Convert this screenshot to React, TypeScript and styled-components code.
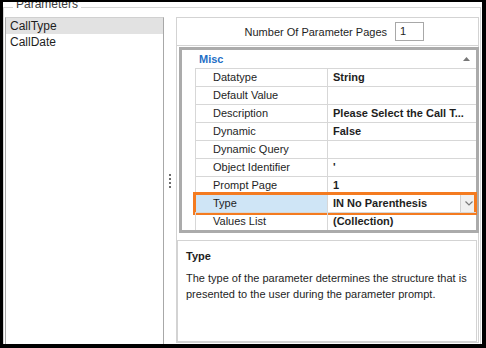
import React from "react";
import styled, { createGlobalStyle } from "styled-components";

const GlobalStyle = createGlobalStyle`
  html, body { margin: 0; padding: 0; background: #000; }
  body {
    width: 486px; height: 348px; overflow: hidden;
    font-family: "Liberation Sans", Arial, sans-serif;
    font-size: 11px; color: #1e1e1e;
  }
`;

const Screen = styled.div`
  margin: 2px 0 0 3px;
  width: 479px;
  height: 342px;
  background: #fff;
  overflow: hidden;
  box-sizing: border-box;
`;

const GroupBox = styled.div`
  position: relative;
  margin-top: 5px;
  width: 478px;
  height: 360px;
  box-sizing: border-box;
  border: 1px solid #d5d5d5;
  display: flex;
  align-items: stretch;
  padding: 9px 0 0 1px;
`;

const Legend = styled.span`
  position: absolute;
  left: 9px;
  top: -10px;
  padding: 0 3px;
  background: #fff;
  color: #3a3a3a;
  font-size: 12px;
  line-height: 13px;
`;

const List = styled.div`
  width: 159px;
  flex: none;
  box-sizing: border-box;
  border: 1px solid #a8a8a8;
  border-bottom: none;
  border-top-color: #d0d0d0;
`;

const ListItem = styled.div<{ $selected?: boolean }>`
  height: 16px;
  line-height: 16px;
  padding-left: 4px;
  background: ${(p) => (p.$selected ? "#e2e2e2" : "transparent")};
  color: #1e1e1e;
  font-size: 12px;
`;

const Splitter = styled.div`
  width: 12px;
  flex: none;
  display: flex;
  flex-direction: column;
  align-items: center;
  padding-top: 157px;
  gap: 2px;
`;

const Dot = styled.span`
  width: 2px;
  height: 2px;
  background: #6e6e6e;
`;

const RightPanel = styled.div`
  width: 303px;
  height: 326px;
  flex: none;
  box-sizing: border-box;
  border: 1px solid #d3d3d3;
  display: flex;
  flex-direction: column;
  padding: 0 1px 0 1px;
`;

const Header = styled.div`
  height: 28px;
  box-sizing: border-box;
  border-bottom: 1px solid #d3d3d3;
  margin: 0 -1px;
  display: flex;
  align-items: center;
  justify-content: flex-end;
  padding-right: 54px;
  gap: 8px;
`;

const PagesInput = styled.div`
  width: 29px;
  height: 19px;
  box-sizing: border-box;
  border: 1px solid #a8a8a8;
  padding-left: 4px;
  line-height: 17px;
`;

const Grid = styled.div`
  margin: 1px 0 0 1px;
  width: 300px;
  box-sizing: border-box;
  border: 3px solid #ababab;
  display: flex;
  flex-direction: column;
`;

const Category = styled.div`
  height: 18px;
  display: flex;
  align-items: center;
  padding-left: 17px;
  padding-right: 6px;
  justify-content: space-between;
  font-weight: bold;
  color: #1f6fc6;
`;

const Row = styled.div`
  position: relative;
  display: flex;
  height: 18px;
`;

const Gutter = styled.div`
  width: 13px;
  flex: none;
  border-right: 1px solid #d7d7d7;
`;

const NameCell = styled.div<{ $active?: boolean }>`
  width: 132px;
  flex: none;
  box-sizing: border-box;
  border-top: 1px solid #d7d7d7;
  border-right: 1px solid #d7d7d7;
  padding-left: 17px;
  line-height: 17px;
  white-space: nowrap;
  background: ${(p) => (p.$active ? "#cfe5f6" : "transparent")};
  background-clip: padding-box;
`;

const ValueCell = styled.div`
  flex: 1;
  min-width: 0;
  box-sizing: border-box;
  border-top: 1px solid #d7d7d7;
  padding-left: 5px;
  line-height: 17px;
  font-weight: bold;
  white-space: nowrap;
  overflow: hidden;
  display: flex;
  justify-content: space-between;
`;

const Highlight = styled.div`
  position: absolute;
  left: 11px;
  right: -1px;
  top: -2px;
  bottom: -3px;
  border: 3px solid #f47b20;
  pointer-events: none;
`;

const DropButton = styled.div`
  width: 15px;
  height: 17px;
  flex: none;
  background: #f0f0f0;
  border-left: 1px solid #d0d0d0;
  display: flex;
  align-items: center;
  justify-content: center;
`;

const Description = styled.div`
  margin-top: 7px;
  flex: 1;
  margin-left: -1px;
  border: 1px solid #d3d3d3;
  padding: 8px 8px;
`;

const DescTitle = styled.div`
  font-weight: bold;
  line-height: 14px;
  margin-bottom: 7px;
`;

const DescText = styled.div`
  line-height: 16px;
  color: #1e1e1e;
`;

const rows: [string, string][] = [
  ["Datatype", "String"],
  ["Default Value", ""],
  ["Description", "Please Select the Call T..."],
  ["Dynamic", "False"],
  ["Dynamic Query", ""],
  ["Object Identifier", "'"],
  ["Prompt Page", "1"],
];

export default function App() {
  return (
    <>
      <GlobalStyle />
      <Screen>
        <GroupBox>
          <Legend>Parameters</Legend>
          <List>
            <ListItem $selected>CallType</ListItem>
            <ListItem>CallDate</ListItem>
          </List>
          <Splitter>
            <Dot />
            <Dot />
            <Dot />
            <Dot />
          </Splitter>
          <RightPanel>
            <Header>
              <span>Number Of Parameter Pages</span>
              <PagesInput>1</PagesInput>
            </Header>
            <Grid>
              <Category>
                <span>Misc</span>
                <svg width="7" height="4" viewBox="0 0 7 4">
                  <path d="M3.5 0 L7 4 L0 4 Z" fill="#777" />
                </svg>
              </Category>
              {rows.map(([n, v]) => (
                <Row key={n}>
                  <Gutter />
                  <NameCell>{n}</NameCell>
                  <ValueCell>{v}</ValueCell>
                </Row>
              ))}
              <Row>
                <Gutter />
                <NameCell $active>Type</NameCell>
                <ValueCell>
                  <span>IN No Parenthesis</span>
                  <DropButton>
                    <svg width="8" height="5" viewBox="0 0 8 5">
                      <path d="M0.5 0.5 L4 4 L7.5 0.5" stroke="#7a7a7a" strokeWidth="1.2" fill="none" />
                    </svg>
                  </DropButton>
                </ValueCell>
                <Highlight />
              </Row>
              <Row>
                <Gutter />
                <NameCell>Values List</NameCell>
                <ValueCell>(Collection)</ValueCell>
              </Row>
            </Grid>
            <Description>
              <DescTitle>Type</DescTitle>
              <DescText>
                The type of the parameter determines the structure that is
                <br />
                presented to the user during the parameter prompt.
              </DescText>
            </Description>
          </RightPanel>
        </GroupBox>
      </Screen>
    </>
  );
}
